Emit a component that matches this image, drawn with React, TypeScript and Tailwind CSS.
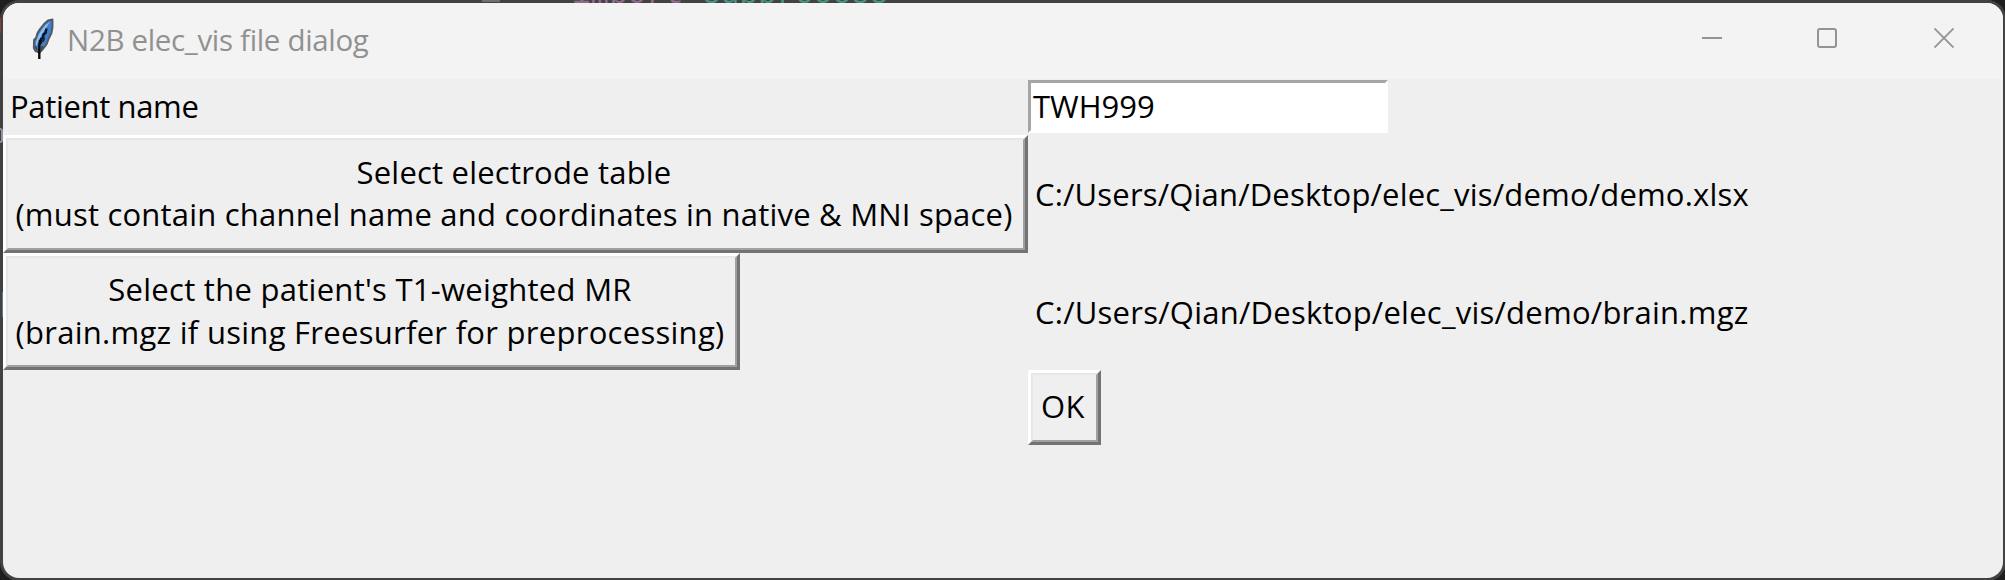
import type { ReactNode } from "react";

function FeatherIcon() {
  return (
    <svg width="24" height="42" viewBox="0 0 24 42" className="block shrink-0">
      <path
        d="M20.5 1.5 L16 2.5 L12 6 L8 11 L5.5 15 L4 20 L2 22 L1.8 30 L3.5 33 L7.5 34.5 L11 31 L14.5 26.5 L17 20 L19.5 15 L20.5 9 Z"
        fill="#3f7fcd"
        stroke="#55585c"
        strokeWidth="1.9"
        strokeLinejoin="round"
      />
      <path d="M18 3.5 L13 7.5 L9 13 L6 18 L4 24 L4 29 L7 22 L10 16 L14 10 Z" fill="#8fc0f0" />
      <path d="M14.5 10.5 L13.5 15 L11.5 16.5 L11 20 L9 21 L8.5 26" fill="none" stroke="#0c1420" strokeWidth="2.4" />
      <path d="M12.5 20 L10.5 24" fill="none" stroke="#16243a" strokeWidth="1.8" />
      <path d="M8 22 L7.3 28 L7.3 41" fill="none" stroke="#0b0b0b" strokeWidth="2.4" />
      <path d="M3.5 28 L5 32 M10.5 28 L9 32" fill="none" stroke="#3c4046" strokeWidth="1.5" />
    </svg>
  );
}

function TitleButton({ label, children }: { label: string; children: ReactNode }) {
  return (
    <button aria-label={label} className="flex h-[70px] w-[116px] items-center justify-center">
      <svg width="20" height="20" viewBox="0 0 20 20" fill="none" stroke="#939393" strokeWidth="2">
        {children}
      </svg>
    </button>
  );
}

function RaisedButton({ className, children }: { className: string; children: ReactNode }) {
  return (
    <button
      className={
        "border-t-[3px] border-r-[3px] border-b-[3px] border-l-[3px] border-t-white border-l-white border-r-[#737373] border-b-[#737373] " +
        className
      }
    >
      <span className="flex h-full w-full flex-col items-center justify-center border-2 border-t-[#e6e6e6] border-l-[#e6e6e6] border-r-[#a0a0a0] border-b-[#a0a0a0] pr-[3px] pb-[2px] leading-[42.5px] whitespace-nowrap">
        {children}
      </span>
    </button>
  );
}

export default function App() {
  return (
    <div className="relative h-[580px] w-[2005px] overflow-hidden bg-[#1e1e1e] font-['Open_Sans',sans-serif] text-[31px] text-black">
      <div className="h-[581px] w-[2006px] overflow-hidden rounded-[19px] bg-[#424242] p-[3px]">
        <div className="flex h-[575px] w-[2000px] flex-col overflow-hidden rounded-[16px] bg-[#efefef]">
          <header className="flex h-[76px] shrink-0 items-start bg-[#f3f3f3] pl-[29px]">
            <div className="pt-[15px]">
              <FeatherIcon />
            </div>
            <h1 className="ml-[11px] flex-1 pt-[17px] text-[29.5px] leading-[40px] tracking-[-0.33px] whitespace-nowrap text-[#919191]">
              N2B elec_vis file dialog
            </h1>
            <div className="mr-px flex">
              <TitleButton label="Minimize">
                <path d="M0 10H20" />
              </TitleButton>
              <div className="-ml-px mr-px">
                <TitleButton label="Maximize">
                  <rect x="1" y="1" width="18" height="18" rx="2" />
                </TitleButton>
              </div>
              <TitleButton label="Close">
                <path d="M0.5 0.5L19.5 19.5M19.5 0.5L0.5 19.5" strokeWidth="1.8" />
              </TitleButton>
            </div>
          </header>
          <main className="grid grid-cols-[1025px_1fr] grid-rows-[56px_118px_117px_75px]">
            <div className="flex items-center pb-px pl-[7px] tracking-[-0.34px]">Patient name</div>
            <div className="pt-px">
              <div className="flex h-[53px] w-[360px] items-center border-[3px] border-t-[#a6a6a6] border-l-[#a6a6a6] border-r-white border-b-white bg-white pl-[2px]">
                TWH999
              </div>
            </div>
            <RaisedButton className="h-[118px] w-[1025px] tracking-[0.21px]">
              <span>Select electrode table</span>
              <span>(must contain channel name and coordinates in native &amp; MNI space)</span>
            </RaisedButton>
            <div className="flex items-center pl-[7px] tracking-[0.18px]">
              C:/Users/Qian/Desktop/elec_vis/demo/demo.xlsx
            </div>
            <RaisedButton className="h-[117px] w-[737px] tracking-[0.28px]">
              <span>Select the patient's T1-weighted MR</span>
              <span>(brain.mgz if using Freesurfer for preprocessing)</span>
            </RaisedButton>
            <div className="flex items-center pt-px pl-[7px] tracking-[0.24px]">
              C:/Users/Qian/Desktop/elec_vis/demo/brain.mgz
            </div>
            <div />
            <RaisedButton className="h-[75px] w-[73px] tracking-[0.5px]">
              <span>OK</span>
            </RaisedButton>
          </main>
        </div>
      </div>
      {/* Slivers of the editor that show through the window frame */}
      <div aria-hidden="true" className="absolute top-0 left-[482px] h-[2px] w-[18px] bg-[#707070]" />
      <div
        aria-hidden="true"
        className="absolute top-0 left-[572px] h-[3px] overflow-hidden font-['Liberation_Mono',monospace] text-[31px] whitespace-pre opacity-60"
      >
        <div className="-mt-[21px] leading-[31px]">
          <span className="text-[#c586c0]">import</span> <span className="text-[#4ec9b0]">subprocess</span>
        </div>
      </div>
      <div aria-hidden="true" className="absolute top-[18px] left-0 h-[15px] w-px bg-[#8a3a3a]" />
      <div aria-hidden="true" className="absolute top-[128px] left-0 h-[15px] w-[3px] rounded-r-full border-2 border-l-0 border-[#8f959c]" />
      <div aria-hidden="true" className="absolute top-[292px] left-[2px] h-[25px] w-px bg-[#4f7f9c]" />
    </div>
  );
}
